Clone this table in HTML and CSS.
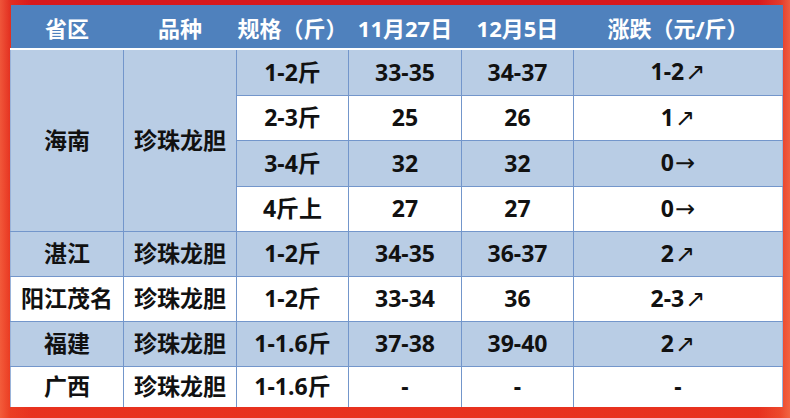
FILE: index.html
```html
<!DOCTYPE html>
<html lang="zh">
<head>
<meta charset="utf-8">
<link rel="stylesheet" href="styles.css">
</head>
<body>
<div class="stage">
<table class="price">
  <colgroup>
    <col class="c1"><col class="c2"><col class="c3"><col class="c4"><col class="c5"><col class="c6">
  </colgroup>
  <thead>
    <tr><th>省区</th><th>品种</th><th>规格（斤）</th><th>11月27日</th><th>12月5日</th><th>涨跌（元/斤）</th></tr>
  </thead>
  <tbody>
    <tr class="blue r46"><td rowspan="4" class="blue">海南</td><td rowspan="4" class="blue">珍珠龙胆</td><td>1-2斤</td><td>33-35</td><td>34-37</td><td>1-2<span class="ar">↗</span></td></tr>
    <tr class="white r45"><td>2-3斤</td><td>25</td><td>26</td><td>1<span class="ar">↗</span></td></tr>
    <tr class="blue r46"><td>3-4斤</td><td>32</td><td>32</td><td>0<span class="ar">→</span></td></tr>
    <tr class="white r45"><td>4斤上</td><td>27</td><td>27</td><td>0<span class="ar">→</span></td></tr>
    <tr class="blue r45"><td>湛江</td><td>珍珠龙胆</td><td>1-2斤</td><td>34-35</td><td>36-37</td><td>2<span class="ar">↗</span></td></tr>
    <tr class="white r45"><td>阳江茂名</td><td>珍珠龙胆</td><td>1-2斤</td><td>33-34</td><td>36</td><td>2-3<span class="ar">↗</span></td></tr>
    <tr class="blue r45"><td>福建</td><td>珍珠龙胆</td><td>1-1.6斤</td><td>37-38</td><td>39-40</td><td>2<span class="ar">↗</span></td></tr>
    <tr class="white r41"><td>广西</td><td>珍珠龙胆</td><td>1-1.6斤</td><td>-</td><td>-</td><td>-</td></tr>
  </tbody>
</table>
</div>
</body>
</html>
```
FILE: styles.css
```css
html, body {
  margin: 0;
  padding: 0;
}
body {
  width: 790px;
  height: 418px;
  overflow: hidden;
  background:
    linear-gradient(90deg, rgba(248,110,70,0.7) 0%, rgba(240,80,40,0.4) 1.3%, rgba(226,32,26,0) 4%, rgba(226,32,26,0) 96%, rgba(242,100,60,0.45) 98.8%, rgba(246,120,80,0.7) 100%),
    linear-gradient(180deg, #d8191c 0%, #e2241c 50%, #e8321f 100%);
  font-family: "Noto Sans", "Noto Sans CJK SC", sans-serif;
}
.stage {
  padding: 5px 8px 10px 10px;
}
.price {
  border-collapse: collapse;
  table-layout: fixed;
  width: 772px;
  font-weight: bold;
  color: #111;
}
.c1 { width: 113px; }
.c2 { width: 113px; }
.c3 { width: 112px; }
.c4 { width: 113px; }
.c5 { width: 112px; }
.c6 { width: 209px; }
.price th {
  background: #4f81bd;
  color: #fff;
  font-size: 22px;
  height: 43px;
  padding: 0;
  border-bottom: 2px solid #ffffff;
  font-weight: bold;
}
.price td {
  text-align: center;
  vertical-align: middle;
  padding: 0;
  font-size: 23px;
  border: 1px solid #7396cb;
  line-height: 1;
}
.price tbody tr td:first-child { border-left: 1px solid #9ab3d9; }
.price tbody tr td:last-child { border-right: 1px solid #9ab3d9; }
.blue, .blue td { background: #b9cde5; }
.white, .white td { background: #ffffff; }
td.blue { background: #b9cde5; }
.r46 { height: 46px; }
.r45 { height: 45px; }
.r41 { height: 41px; }
.price tbody tr:last-child td { border-bottom: none; }
.ar {
  font-family: "DejaVu Sans", sans-serif;
  font-weight: normal;
  font-size: 24px;
  margin-left: 1px;
}
```
